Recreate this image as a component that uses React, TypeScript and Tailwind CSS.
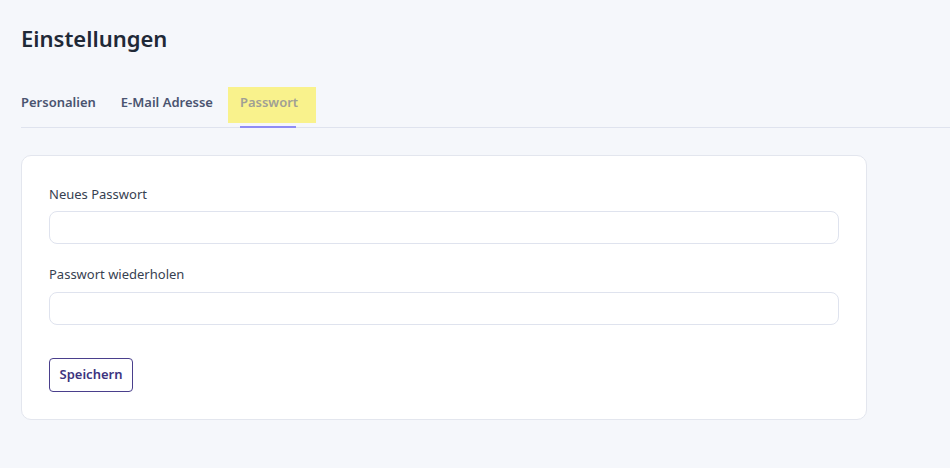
export default function App() {
  return (
    <div className="min-h-[468px] w-full bg-[#f5f7fb] font-['Noto_Sans',sans-serif]">
      <div className="pl-[21px] pt-[22px]">
        <h1 className="text-[22px] leading-[32px] font-semibold text-[#1f2937]">Einstellungen</h1>
        <div className="mt-[33px] flex border-b border-[#dfe3ee]">
          <div className="h-[40px] pt-[5px] pr-[25px] text-[13px] leading-[20px] font-semibold text-[#4a5470]">
            Personalien
          </div>
          <div className="h-[40px] pt-[5px] pr-[15px] text-[13px] leading-[20px] font-semibold text-[#4a5470]">
            E-Mail Adresse
          </div>
          <div className="relative h-[40px]">
            <div className="h-[36px] w-[88px] bg-[#f9f28c] pt-[5px] pl-[12px] text-[13px] leading-[20px] font-semibold text-[#a09f95]">
              Passwort
            </div>
            <div className="absolute bottom-[-1px] left-[12px] h-[2px] w-[56px] bg-[#8f8cf5]" />
          </div>
        </div>
        <div className="mt-[27px] w-[846px] rounded-[10px] border border-[#e3e6ee] bg-white px-[27px] pt-[28px] pb-[27px]">
          <label className="block text-[13px] leading-[20px] text-[#374151]">Neues Passwort</label>
          <input type="password" className="mt-[7px] block h-[33px] w-[790px] rounded-[8px] border border-[#dfe3ee] bg-white" />
          <label className="mt-[20px] block text-[13px] leading-[20px] text-[#374151]">Passwort wiederholen</label>
          <input type="password" className="mt-[8px] block h-[33px] w-[790px] rounded-[8px] border border-[#dfe3ee] bg-white" />
          <button className="mt-[33px] block h-[34px] w-[84px] rounded-[4px] border border-[#4a3f8c] bg-white text-[13px] font-semibold text-[#3d3480]">
            Speichern
          </button>
        </div>
      </div>
    </div>
  );
}
